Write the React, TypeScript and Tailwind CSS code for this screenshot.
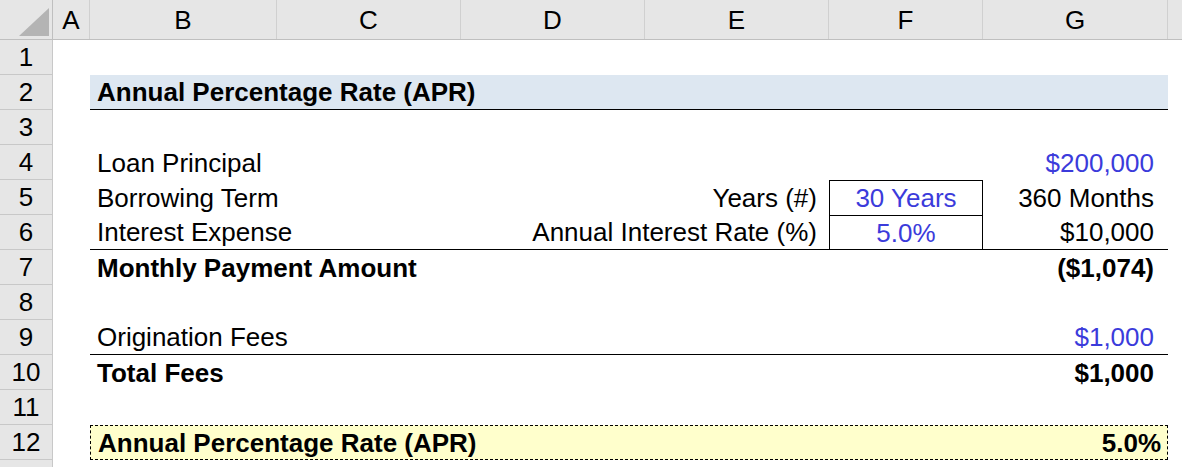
import React from "react";

const cols = [
  { label: "A", w: "w-[37px]" },
  { label: "B", w: "w-[187px]" },
  { label: "C", w: "w-[184px]" },
  { label: "D", w: "w-[184px]" },
  { label: "E", w: "w-[184px]" },
  { label: "F", w: "w-[154px]" },
  { label: "G", w: "w-[185px]" },
];

const blue = "text-[#3b3bdb]";

type Row = {
  n: number;
  cls?: string;
  content?: React.ReactNode;
};

const Line = ({
  left,
  mid,
  box,
  boxTop,
  right,
  bold,
  rightBlue,
}: {
  left?: string;
  mid?: string;
  box?: string;
  boxTop?: boolean;
  right?: string;
  bold?: boolean;
  rightBlue?: boolean;
}) => (
  <div className={`flex h-full items-center ${bold ? "font-bold" : ""}`}>
    <div className="w-[371px] pl-[7px] whitespace-nowrap">{left}</div>
    <div className="w-[368px] pr-[12px] text-right whitespace-nowrap">{mid}</div>
    <div
      className={`w-[154px] h-full flex items-center justify-center ${blue} ${
        box !== undefined ? "border-x border-black" : ""
      } ${boxTop ? "border-t" : ""}`}
    >
      {box}
    </div>
    <div className={`w-[185px] pr-[14px] text-right whitespace-nowrap ${rightBlue ? blue : ""}`}>
      {right}
    </div>
  </div>
);

const rows: Row[] = [
  { n: 1 },
  {
    n: 2,
    cls: "bg-[#dde7f1] border-b border-black",
    content: (
      <div className="h-full flex items-center pl-[7px] font-bold">Annual Percentage Rate (APR)</div>
    ),
  },
  { n: 3 },
  { n: 4, content: <Line left="Loan Principal" right="$200,000" rightBlue /> },
  {
    n: 5,
    content: <Line left="Borrowing Term" mid="Years (#)" box="30 Years" boxTop right="360 Months" />,
  },
  {
    n: 6,
    cls: "border-b border-black",
    content: <Line left="Interest Expense" mid="Annual Interest Rate (%)" box="5.0%" boxTop right="$10,000" />,
  },
  { n: 7, content: <Line left="Monthly Payment Amount" right="($1,074)" bold /> },
  { n: 8 },
  {
    n: 9,
    cls: "border-b border-black",
    content: <Line left="Origination Fees" right="$1,000" rightBlue />,
  },
  { n: 10, content: <Line left="Total Fees" right="$1,000" bold /> },
  { n: 11 },
  {
    n: 12,
    cls: "bg-[#ffffcc] border border-dashed border-black",
    content: (
      <div className="h-full flex items-center justify-between pl-[7px] pr-[6px] font-bold">
        <span>Annual Percentage Rate (APR)</span>
        <span>5.0%</span>
      </div>
    ),
  },
  { n: 13 },
];

export default function App() {
  return (
    <div
      className="w-[1182px] h-[467px] overflow-hidden bg-white text-black text-[26px] leading-none"
      style={{ fontFamily: '"Liberation Sans", Arial, sans-serif' }}
    >
      <div className="flex h-[40px] bg-[#e6e6e6] border-b border-[#bfbfbf]">
        <div className="w-[53px] border-r border-[#bfbfbf] flex items-end justify-end p-[3px]">
          <div className="w-0 h-0 border-l-[30px] border-l-transparent border-b-[28px] border-b-[#b4b4b4]" />
        </div>
        {cols.map((c) => (
          <div
            key={c.label}
            className={`${c.w} border-r border-[#d0d0d0] flex items-center justify-center text-[26px]`}
          >
            {c.label}
          </div>
        ))}
        <div className="flex-1" />
      </div>
      {rows.map((r) => (
        <div key={r.n} className="flex h-[35px]">
          <div className="w-[53px] shrink-0 bg-[#e6e6e6] border-r border-b border-[#c8c8c8] flex items-center justify-center">
            {r.n}
          </div>
          <div className="w-[37px] shrink-0" />
          <div className={`w-[1078px] shrink-0 ${r.cls ?? ""}`}>{r.content}</div>
        </div>
      ))}
    </div>
  );
}
